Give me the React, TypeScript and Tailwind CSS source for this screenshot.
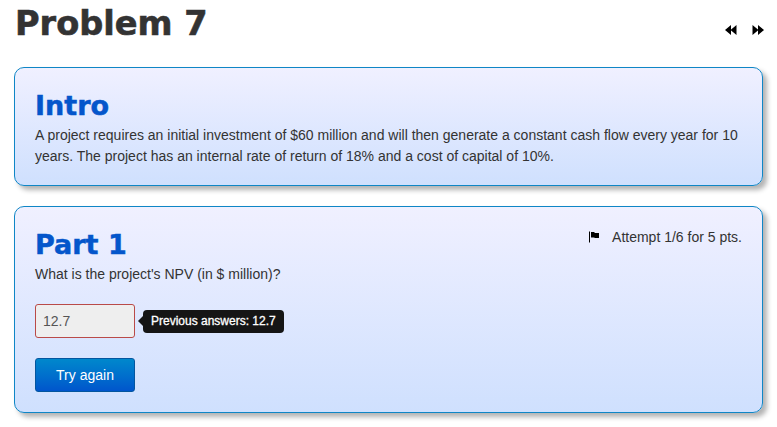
import * as React from "react";

const cardClass =
  "mx-[14px] rounded-[10px] border border-[#0f86c6] bg-gradient-to-b from-[#f0f0ff] to-[#cfe0fe] shadow-[4px_4px_5px_rgba(0,0,0,0.3)]";

function Heading(props: { children: React.ReactNode }) {
  return (
    <h2 className="font-['DejaVu_Sans',sans-serif] text-[27px] leading-[30px] font-bold text-[#0456cb] [-webkit-text-stroke:0.5px_#0456cb]">
      {props.children}
    </h2>
  );
}

function NavIcon(props: { flip?: boolean }) {
  return (
    <svg
      width="12"
      height="10"
      viewBox="0 0 12 10"
      className={props.flip ? "-scale-x-100" : ""}
    >
      <path d="M0 5L6 0V10ZM5.5 5L11.5 0V10Z" fill="#000" />
    </svg>
  );
}

export default function App() {
  return (
    <div className="h-[427px] w-[777px] overflow-hidden bg-white font-['Liberation_Sans',sans-serif] text-[14px] text-[#333]">
      <div className="flex h-[67px] items-start justify-between pr-[13px] pl-[15px]">
        <h1 className="font-['DejaVu_Sans',sans-serif] text-[33.6px] leading-[48px] font-bold text-[#333] [-webkit-text-stroke:0.6px_#333]">
          Problem 7
        </h1>
        <div className="mt-[25px] flex gap-[15px]">
          <NavIcon />
          <NavIcon flip />
        </div>
      </div>

      <section className={`${cardClass} h-[119px] px-5 pt-[23px]`}>
        <Heading>Intro</Heading>
        <p className="mt-[4px] leading-[21px]">
          A project requires an initial investment of $60 million and will then
          generate a constant cash flow every year for 10 years. The project has
          an internal rate of return of 18% and a cost of capital of 10%.
        </p>
      </section>

      <section className={`${cardClass} mt-5 h-[207px] px-5 pt-[23px]`}>
        <div className="flex items-start justify-between">
          <Heading>Part 1</Heading>
          <div className="-mt-[1px] flex items-center leading-[16px]">
            <svg width="12" height="12" viewBox="0 0 12 12" className="mr-[12px]">
              <path d="M1.5 0.5V11.5" stroke="#000" strokeWidth="1" />
              <path d="M3 1H6L7 2H11V7H7L6 6.5H3Z" fill="#000" />
            </svg>
            Attempt 1/6 for 5 pts.
          </div>
        </div>
        <p className="mt-[4px] leading-[20px]">
          What is the project's NPV (in $ million)?
        </p>
        <div className="mt-[20px] flex items-center">
          <input
            readOnly
            value="12.7"
            className="h-[34px] w-[100px] rounded-[3px] border border-[#b94a48] bg-[#eee] px-[7px] text-[14px] text-[#555] outline-none"
          />
          <div className="relative ml-2 flex h-[23px] items-center rounded-[4px] bg-[#151515] px-2 text-[12px] text-white [-webkit-text-stroke:0.3px_#fff]">
            <span className="absolute top-[6px] -left-[5px] h-0 w-0 border-y-[5px] border-r-[5px] border-y-transparent border-r-[#151515]" />
            Previous answers: 12.7
          </div>
        </div>
        <button className="mt-5 h-[34px] w-[100px] rounded-[3px] border border-[#04569f] bg-gradient-to-b from-[#0088cc] to-[#0055cc] text-[14px] text-white">
          Try again
        </button>
      </section>
    </div>
  );
}
